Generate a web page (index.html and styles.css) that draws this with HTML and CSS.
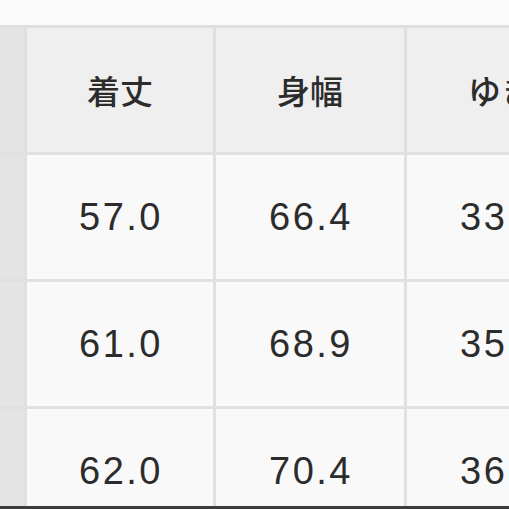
FILE: index.html
```html
<!DOCTYPE html>
<html lang="ja">
<head>
<meta charset="utf-8">
<link rel="stylesheet" href="styles.css">
</head>
<body>
<div class="frame">
  <div class="table">
    <div class="side"></div>
    <div class="cell head">着丈</div>
    <div class="cell head">身幅</div>
    <div class="cell head">ゆき</div>

    <div class="side"></div>
    <div class="cell num">57.0</div>
    <div class="cell num">66.4</div>
    <div class="cell num">33.5</div>

    <div class="side"></div>
    <div class="cell num">61.0</div>
    <div class="cell num">68.9</div>
    <div class="cell num">35.0</div>

    <div class="side"></div>
    <div class="cell num">62.0</div>
    <div class="cell num">70.4</div>
    <div class="cell num">36.5</div>
  </div>
</div>
<div class="bottombar"></div>
</body>
</html>
```

FILE: styles.css
```css
html, body {
  margin: 0;
  padding: 0;
  background: #fafafa;
  overflow: hidden;
  width: 509px;
  height: 509px;
}
.frame {
  margin-top: 25px;
  height: 481px;
  overflow: hidden;
  width: 509px;
}
.table {
  display: grid;
  grid-template-columns: 24px 186px 188px 188px;
  grid-auto-rows: 124px;
  gap: 3px;
  padding-top: 3px;
  background: #e0e0e0;
  width: max-content;
  font-family: "Noto Sans CJK JP", "Liberation Sans", sans-serif;
  color: #2c2c2c;
}
.side {
  background: #e4e4e4;
}
.cell {
  display: flex;
  align-items: center;
  justify-content: center;
}
.head {
  background: #efefef;
  font-size: 33px;
  font-weight: 500;
}
.num {
  background: #f9f9f9;
  font-family: "Liberation Sans", Arial, sans-serif;
  font-size: 38px;
  letter-spacing: 2.5px;
  padding-left: 2px;
}
.bottombar {
  height: 3px;
  background: #3c3c3c;
}
```
